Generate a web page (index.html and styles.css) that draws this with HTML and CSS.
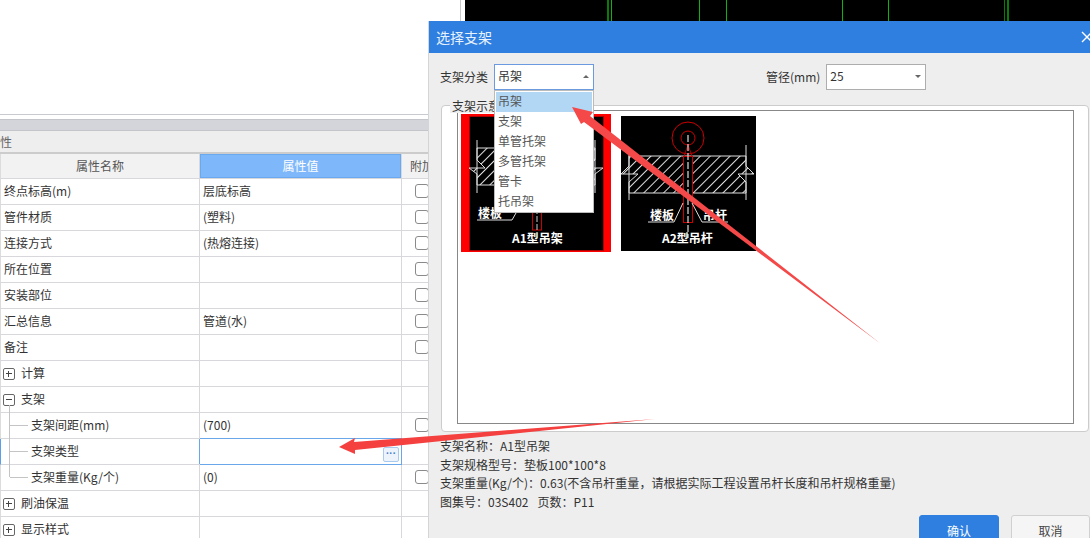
FILE: index.html
```html
<!DOCTYPE html>
<html lang="zh">
<head>
<meta charset="utf-8">
<title>选择支架</title>
<link rel="stylesheet" href="styles.css">
</head>
<body>
<div class="shell">
  <section class="panel">
    <div class="panel-blank"></div>
    <div class="panel-band"></div>
    <div class="panel-title">性</div>
    <div class="row head">
      <div class="cell name">属性名称</div>
      <div class="cell val">属性值</div>
      <div class="cell extra">附加</div>
    </div>
    <div class="row"><div class="cell">终点标高(m)</div><div class="cell">层底标高</div><div class="cell extra"><i class="check"></i></div></div>
    <div class="row"><div class="cell">管件材质</div><div class="cell">(塑料)</div><div class="cell extra"><i class="check"></i></div></div>
    <div class="row"><div class="cell">连接方式</div><div class="cell">(热熔连接)</div><div class="cell extra"><i class="check"></i></div></div>
    <div class="row"><div class="cell">所在位置</div><div class="cell"></div><div class="cell extra"><i class="check"></i></div></div>
    <div class="row"><div class="cell">安装部位</div><div class="cell"></div><div class="cell extra"><i class="check"></i></div></div>
    <div class="row"><div class="cell">汇总信息</div><div class="cell">管道(水)</div><div class="cell extra"><i class="check"></i></div></div>
    <div class="row"><div class="cell">备注</div><div class="cell"></div><div class="cell extra"><i class="check"></i></div></div>
    <div class="row"><div class="cell group-cell"><i class="toggle plus"></i>计算</div><div class="cell"></div><div class="cell extra"></div></div>
    <div class="row"><div class="cell group-cell"><i class="toggle"></i>支架</div><div class="cell"></div><div class="cell extra"></div></div>
    <div class="row"><div class="cell child first">支架间距(mm)</div><div class="cell">(700)</div><div class="cell extra"><i class="check"></i></div></div>
    <div class="row selected"><div class="cell child">支架类型</div><div class="cell active"><span class="more">···</span></div><div class="cell extra"></div></div>
    <div class="row"><div class="cell child last">支架重量(Kg/个)</div><div class="cell">(0)</div><div class="cell extra"><i class="check"></i></div></div>
    <div class="row"><div class="cell group-cell"><i class="toggle plus"></i>刷油保温</div><div class="cell"></div><div class="cell extra"></div></div>
    <div class="row"><div class="cell group-cell"><i class="toggle plus"></i>显示样式</div><div class="cell"></div><div class="cell extra"></div></div>
  </section>
  <section class="viewport">
    <svg class="canvas" width="625" height="21" viewBox="0 0 625 21" aria-hidden="true">
      <rect width="625" height="21" fill="#000"/>
      <rect x="142" width="2" height="21" fill="#0a7a0a"/>
      <rect x="146" width="1" height="21" fill="#0fb30f"/>
      <rect x="234" width="1" height="21" fill="#0fb30f"/>
      <rect x="261" width="1" height="21" fill="#0fb30f"/>
      <rect x="377" width="1" height="21" fill="#0fb30f"/>
      <rect x="423" width="1" height="21" fill="#0fb30f"/>
      <rect x="539" width="1" height="21" fill="#0a7a0a"/>
      <rect x="542" width="2" height="21" fill="#0a7a0a"/>
    </svg>
  </section>
</div>

<section class="dialog">
  <header class="dialog-title">
    <span>选择支架</span>
    <svg class="close" width="12" height="12" viewBox="0 0 12 12" aria-hidden="true"><path d="M1 1l10 10M11 1L1 11" stroke="#fff" stroke-width="1.4"/></svg>
  </header>
  <div class="dialog-body">
    <div class="filters">
      <label class="lbl">支架分类</label>
      <div class="select open">吊架<i class="caret up"></i>
        <ul class="menu">
          <li class="on">吊架</li>
          <li>支架</li>
          <li>单管托架</li>
          <li>多管托架</li>
          <li>管卡</li>
          <li>托吊架</li>
        </ul>
      </div>
      <label class="lbl second">管径(mm)</label>
      <div class="select">25<i class="caret"></i></div>
    </div>
    <div class="group">
      <span class="legend">支架示意图</span>
      <div class="gallery">
        <div class="pic picked">
          <svg width="135" height="135" viewBox="0 0 135 135" aria-hidden="true">
            <defs>
              <pattern id="hatch" width="7" height="7" patternUnits="userSpaceOnUse" patternTransform="rotate(45)">
                <rect width="1" height="7" fill="#ddd"/>
              </pattern>
            </defs>
            <rect width="135" height="135" fill="#000"/>
            <rect x=".5" y=".5" width="134" height="134" fill="none" stroke="#a00"/>
            <g fill="url(#hatch)" stroke="#ddd">
              <path d="M8 32H60V69H8V58L0 52H16L8 44Z"/>
              <path d="M126 32H76V69H126V58L134 52H118L126 44Z"/>
            </g>
            <path d="M8 24V77M126 24V77" stroke="#ddd" fill="none"/>
            <rect x="63.500" y="60" width="9" height="54" fill="#000" stroke="#c00"/>
            <path d="M68 60V114" stroke="#ccc" stroke-dasharray="6 2"/>
            <path d="M8 104H43L47 97" stroke="#ddd" fill="none"/>
            <text class="cad" x="9" y="102">楼板</text>
            <text class="cad" x="43" y="127">A1型吊架</text>
          </svg>
        </div>
        <div class="pic">
          <svg width="135" height="135" viewBox="0 0 135 135" aria-hidden="true">
            <defs>
              <pattern id="hatch2" width="7" height="7" patternUnits="userSpaceOnUse" patternTransform="rotate(45)">
                <rect width="1" height="7" fill="#ddd"/>
              </pattern>
            </defs>
            <rect width="135" height="135" fill="#000"/>
            <path d="M8 40H125V50L133 58H117L125 66V77H8V66L17 58H0L8 50Z" fill="url(#hatch2)" stroke="#ddd"/>
            <path d="M8 39V84M125 29V84" stroke="#ddd" fill="none"/>
            <circle cx="67" cy="22" r="16" fill="none" stroke="#c00"/>
            <circle cx="67" cy="22" r="7" fill="none" stroke="#c00"/>
            <rect x="62.500" y="40.500" width="9" height="66" fill="#000" stroke="#c00"/>
            <path d="M63 40L67 29L71 40" fill="none" stroke="#a00"/>
            <path d="M67 19V122" stroke="#ccc" stroke-width="1.300" stroke-dasharray="7 2"/>
            <path d="M62 87L53 106H27M71 87L81 106H107" stroke="#ddd" fill="none"/>
            <text class="cad" x="29" y="104">楼板</text>
            <text class="cad" x="82" y="104">吊杆</text>
            <text class="cad" x="41" y="127">A2型吊杆</text>
          </svg>
        </div>
      </div>
    </div>
    <div class="info">
      <p>支架名称<span class="punc">：</span>A1型吊架</p>
      <p>支架规格型号<span class="punc">：</span>垫板100*100*8</p>
      <p>支架重量(Kg/个)<span class="punc">：</span>0.63(不含吊杆重量<span class="punc">，</span>请根据实际工程设置吊杆长度和吊杆规格重量)</p>
      <p>图集号<span class="punc">：</span>03S402<span class="gap"></span>页数<span class="punc">：</span>P11</p>
    </div>
    <div class="actions">
      <button class="btn primary">确认</button>
      <button class="btn">取消</button>
    </div>
  </div>
</section>

<svg class="arrows" width="1090" height="538" viewBox="0 0 1090 538" aria-hidden="true">
  <polygon points="572,107 593,112 590,116 881,344 584,122 581,124" fill="#f54848"/>
  <polygon points="339,447 355,438 354,442 655,419 355,450 355,454" fill="#f54040"/>
</svg>
</body>
</html>
```

FILE: styles.css
```css
* { box-sizing: border-box; }
html, body { margin: 0; padding: 0; }
body {
  width: 1090px;
  height: 538px;
  overflow: hidden;
  position: relative;
  background: #fff;
  font: 12px/1.2 "Noto Sans CJK SC", "Liberation Sans", sans-serif;
  color: #333;
}
.shell { display: flex; height: 538px; }
.panel { width: 428px; flex: none; overflow: hidden; }
.panel-blank { height: 115px; border-bottom: 1px solid #c9cad0; }
.panel-band { height: 12px; margin-top: 4px; background: #d4d5da; border-top: 1px solid #c4c5cb; border-bottom: 1px solid #c4c5cb; }
.panel-title { height: 23px; line-height: 21px; background: #eee; border-bottom: 2px solid #ccc; color: #666; }
.row {
  display: grid;
  grid-template-columns: 199px 202px 1fr;
  height: 26px;
  border-left: 1px solid #dcdcdf;
  border-bottom: 1px solid #d8d8dc;
}
.row.head { height: 25px; background: #f2f2f2; }
.row.selected { border-left-color: #5a9fe8; }
.cell {
  position: relative;
  display: flex;
  align-items: center;
  padding-left: 3px;
  border-right: 1px solid #d8d8dc;
  white-space: nowrap;
  color: #333;
}
.cell.extra { border-right: 0; padding-left: 13px; }
.head .cell { justify-content: center; padding: 0; color: #555; }
.head .val { background: #7fb8fa; color: #fff; box-shadow: inset 0 0 0 1px #6aa9f0; }
.head .cell.extra { justify-content: flex-start; padding-left: 8px; }
.check { display: block; flex: none; width: 14px; height: 14px; margin-top: -2px; background: #fff; border: 1px solid #8a8a8a; border-radius: 3px; }
.group-cell { padding-left: 2px; }
.toggle { position: relative; display: block; flex: none; width: 12px; height: 12px; margin-right: 6px; border: 1px solid #666; border-radius: 2px; background: #fff; }
.toggle::before { content: ""; position: absolute; left: 2px; top: 4px; width: 6px; height: 1px; background: #444; }
.toggle.plus::after { content: ""; position: absolute; left: 4px; top: 2px; width: 1px; height: 6px; background: #444; }
.child { padding-left: 30px; }
.child::before { content: ""; position: absolute; left: 8px; top: -1px; width: 1px; height: 27px; background: #c4c4c4; }
.child.first::before { top: -8px; height: 34px; }
.child.last::before { height: 13px; }
.child::after { content: ""; position: absolute; left: 9px; top: 12px; width: 18px; height: 1px; background: #c4c4c4; }
.cell.active { border-right-color: #6aa6ea; box-shadow: -1px 0 0 #6aa6ea, 0 -1px 0 #6aa6ea, 0 1px 0 #6aa6ea; }
.more {
  position: absolute;
  right: 2px;
  bottom: 2px;
  width: 16px;
  height: 15px;
  border: 1px solid #a9c9ef;
  border-radius: 2px;
  background: #edf3fb;
  color: #3f7fd0;
  font: bold 10px/11px "Liberation Sans", sans-serif;
  text-align: center;
}
.viewport { flex: 1; margin-left: 32px; height: 21px; padding-left: 4px; border-left: 1px solid #c9cad0; }
.canvas { display: block; }

.dialog {
  position: absolute;
  left: 428px;
  top: 21px;
  width: 662px;
  height: 540px;
  overflow: hidden;
  background: #eee;
  border-left: 1px solid #d4d5da;
}
.dialog-title {
  display: flex;
  align-items: center;
  justify-content: space-between;
  height: 32px;
  margin-left: -1px;
  padding-left: 8px;
  background: #2e7fe0;
  color: #e8f2ff;
  font-size: 14px;
}
.close { margin-right: -3px; }
.dialog-body { padding: 11px 0 0 11px; }
.filters { display: flex; align-items: center; height: 26px; }
.lbl { margin-right: 6px; color: #333; }
.lbl.second { margin-left: 172px; }
.select { position: relative; width: 100px; height: 26px; line-height: 22px; padding-left: 3px; background: #fff; border: 1px solid #adadad; }
.select.open { border-color: #6c9ae0; }
.caret { position: absolute; right: 4px; top: 10px; border: 3px solid transparent; border-top-color: #666; border-bottom: 0; }
.caret.up { border-top: 0; border-bottom: 3px solid #666; }
.menu { position: absolute; z-index: 3; left: -1px; top: 25px; width: 100px; height: 123px; margin: 0; padding: 1px; list-style: none; background: #fff; border: 1px solid #bbb; }
.menu li { height: 20px; line-height: 18px; padding-left: 2px; color: #555; }
.menu li.on { background: #b1d7f5; }
.group { position: relative; height: 327px; margin: 15px 1px 0 1px; padding: 4px 14px 8px 15px; background: #fff; border: 1px solid #ccc; border-radius: 4px; }
.legend { position: absolute; left: 8px; top: -7px; padding: 0 2px; background: #eee; line-height: 14px; }
.gallery { display: flex; align-items: flex-start; height: 314px; padding: 3px; background: #fff; border: 1px solid #888; }
.pic { margin: 2px 0 0 10px; }
.pic svg { display: block; }
.pic.picked { margin: 0; padding: 2px 7px 1px 8px; background: #f00; }
.cad { fill: #fff; font-size: 12px; font-weight: 700; }
.info { padding: 5px 0 0 0; }
.info p { margin: 0; line-height: 18.7px; color: #333; }
.punc { font-family: "Noto Sans CJK TC", sans-serif; }
.gap { display: inline-block; width: 9px; }
.actions { display: flex; justify-content: flex-end; gap: 12px; margin-top: 3px; }
.btn { width: 79px; height: 32px; border: 1px solid #d0d0d0; border-radius: 3px; background: #f5f5f5; font: inherit; color: #444; }
.btn.primary { width: 80px; border-color: #2e7fe0; background: #2e7fe0; color: #fff; }
.arrows { position: absolute; z-index: 4; left: 0; top: 0; pointer-events: none; }
```
